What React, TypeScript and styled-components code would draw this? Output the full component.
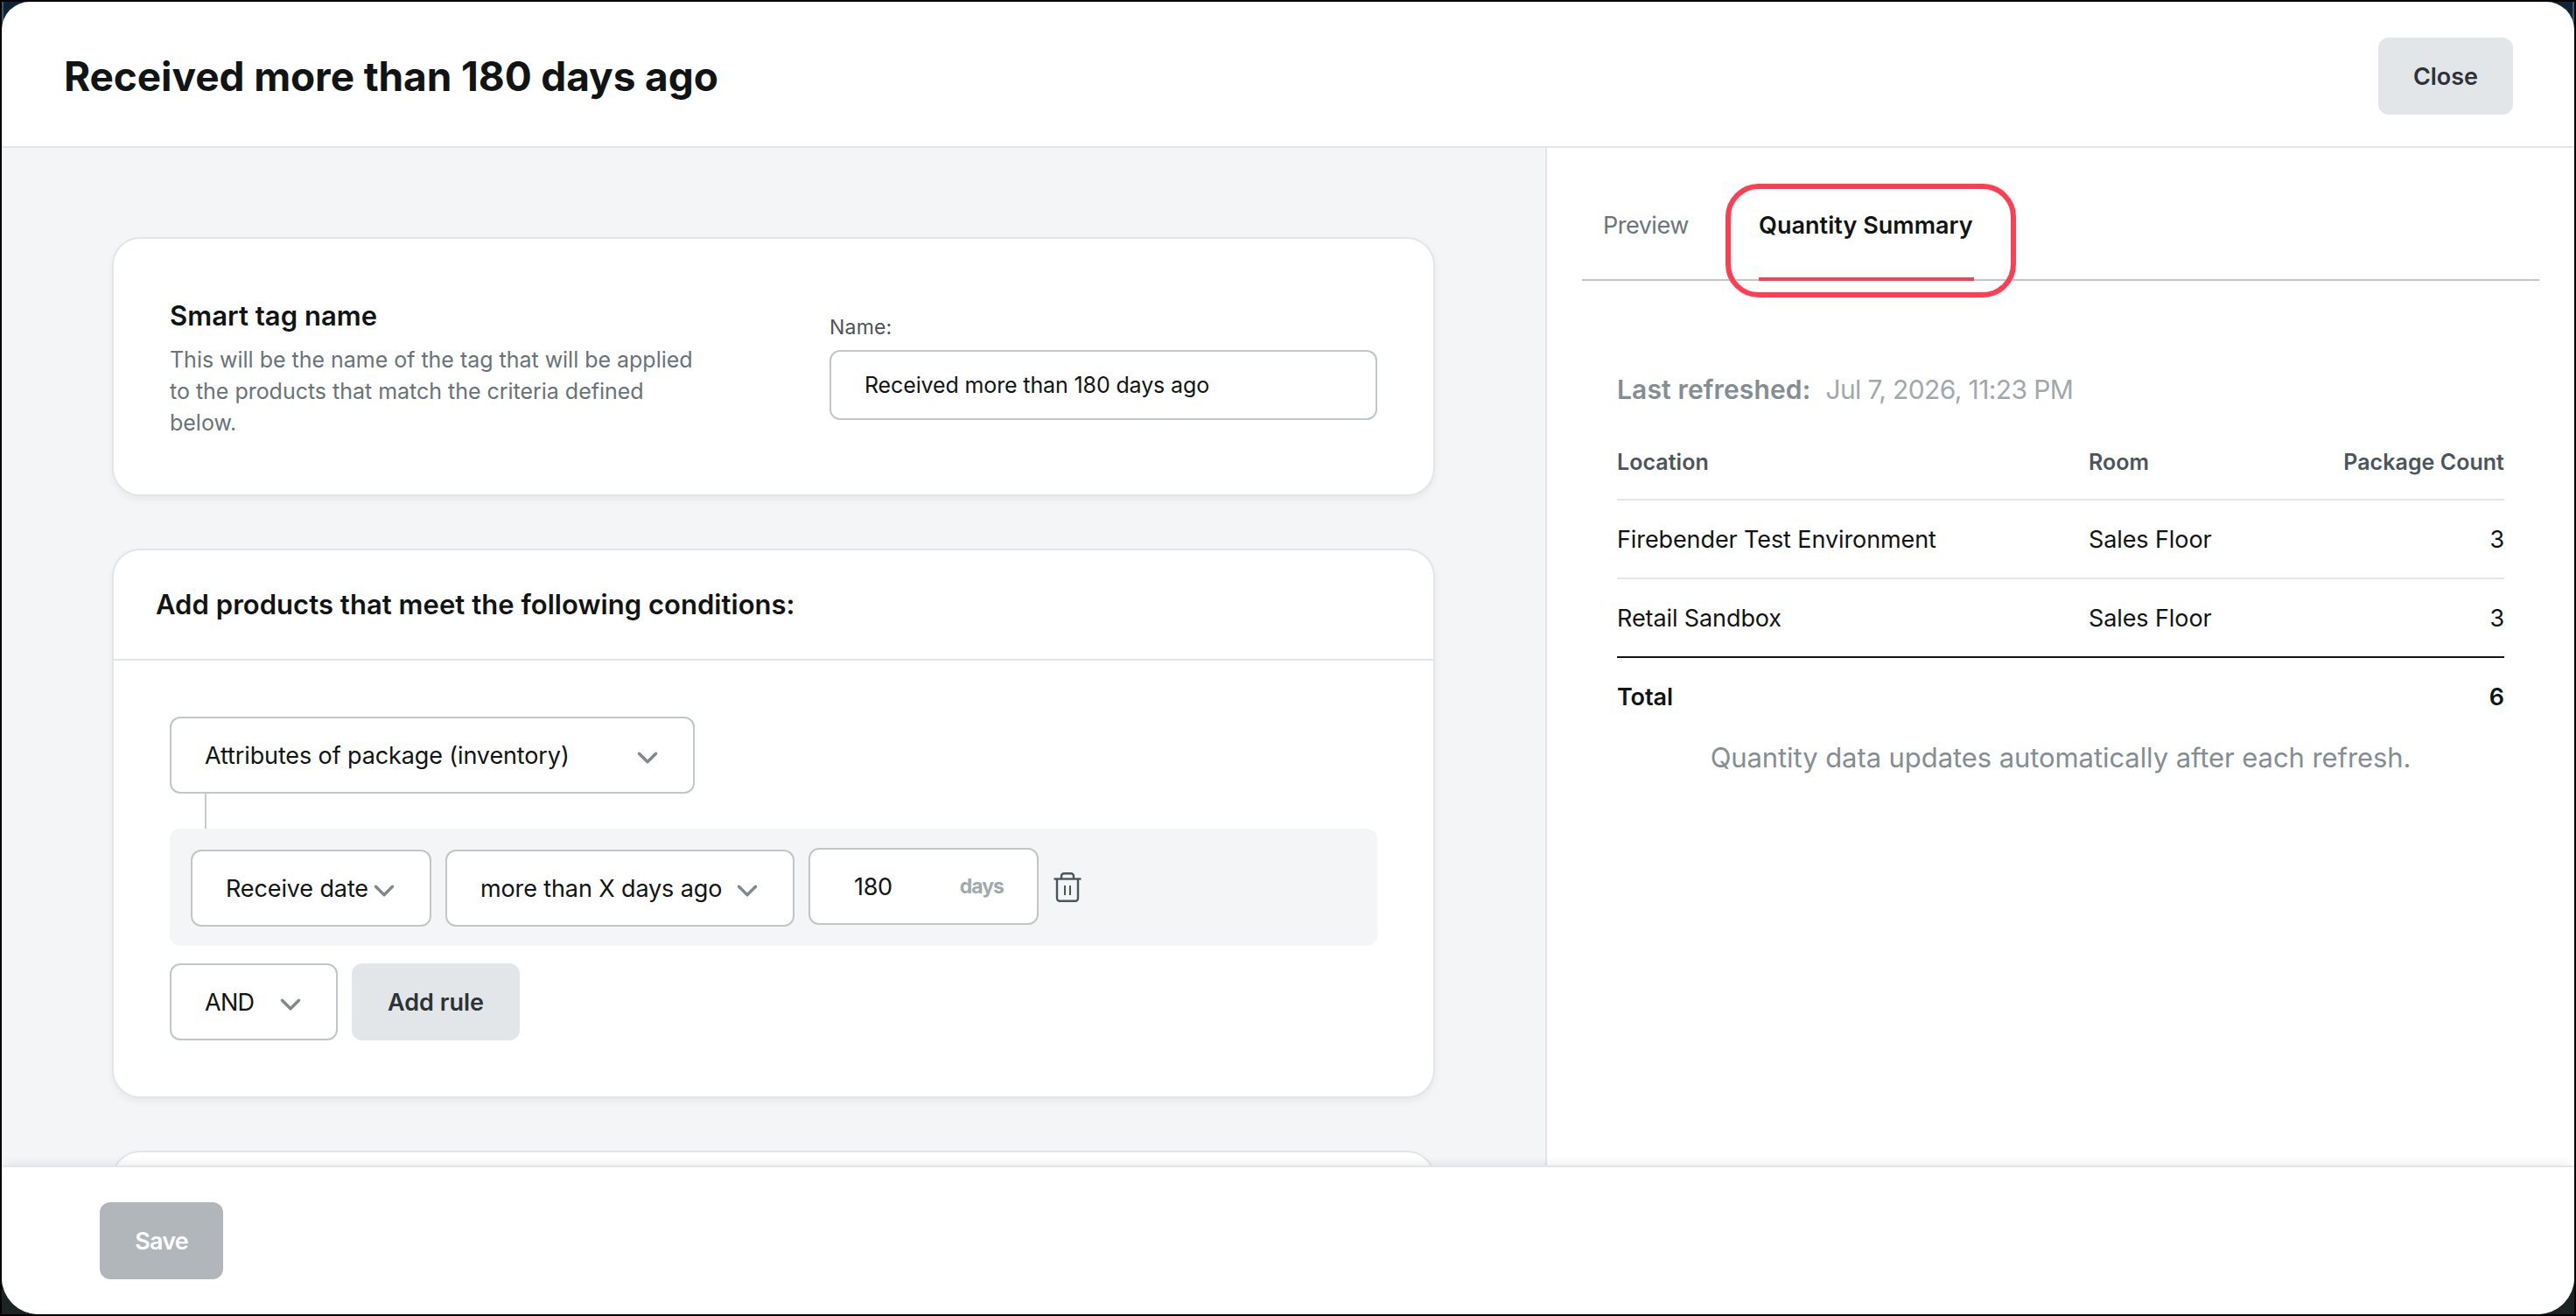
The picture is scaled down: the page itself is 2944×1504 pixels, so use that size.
import React from 'react';
import styled, { createGlobalStyle } from 'styled-components';

const GlobalStyle = createGlobalStyle`
  *, *::before, *::after {
    box-sizing: border-box;
  }

  body {
    margin: 0;
    background: #000000;
    color: #111414;
    font-family: Inter, 'Liberation Sans', sans-serif;
    font-size: 27px;
    line-height: 36px;
  }

  h1, h2, p {
    margin: 0;
  }

  button, input {
    font-family: inherit;
  }
`;

const Backdrop = styled.div`
  position: relative;
  height: 1504px;
  border: 2px solid #000000;
  background: linear-gradient(#0c2338 0 50%, #1d2222 50% 100%);

  /* lighter edge of the page behind the modal */
  &::before {
    content: '';
    position: absolute;
    top: 0;
    left: 0;
    right: 0;
    height: 24px;
    border: solid #41566a;
    border-width: 0 2px;
  }
`;

const Modal = styled.div`
  position: relative;
  display: flex;
  flex-direction: column;
  height: 100%;
  background: #ffffff;
  border-radius: 32px 32px 42px 42px;
  overflow: hidden;
`;

const Header = styled.header`
  display: flex;
  align-items: center;
  justify-content: space-between;
  padding: 41px 70px 36px 71px;
  border-bottom: 2px solid #e2e6e9;
`;

const Title = styled.h1`
  font-size: 46px;
  font-weight: 700;
  line-height: 56px;
  letter-spacing: -0.1px;
`;

const Button = styled.button<{ $width: number; $muted?: boolean; $spacing?: number }>`
  width: ${({ $width }) => $width}px;
  height: 88px;
  padding: 0;
  border: none;
  border-radius: 12px;
  background: ${({ $muted }) => ($muted ? '#b0b6ba' : '#e2e6e9')};
  color: ${({ $muted }) => ($muted ? '#ffffff' : '#2d3236')};
  font-size: 27px;
  font-weight: 600;
  letter-spacing: ${({ $spacing = 0 }) => $spacing}px;
`;

const Content = styled.div`
  display: grid;
  grid-template-columns: 1766px 1fr;
  height: 1163px;
`;

const Editor = styled.main`
  display: flex;
  flex-direction: column;
  gap: 60px;
  padding: 102px 126px 0;
  border-right: 2px solid #e2e6e9;
  background: #f4f5f7;
  overflow: hidden;
`;

const Card = styled.section`
  flex: none;
  width: 1512px;
  min-height: 120px;
  border: 2px solid #e2e6e9;
  border-radius: 32px;
  background: #ffffff;
  box-shadow: 0 4px 8px rgba(17, 20, 20, 0.05);
`;

const NameRow = styled.div`
  display: flex;
  justify-content: space-between;
  padding: 66px 64px 64px;
`;

const NameInfo = styled.div`
  width: 612px;
`;

const CardTitle = styled.h2`
  font-size: 31px;
  font-weight: 600;
  line-height: 44px;
  letter-spacing: 0.04px;
`;

const Description = styled.p`
  margin-top: 10px;
  color: #687379;
  font-size: 25px;
  letter-spacing: -0.02px;
`;

const Field = styled.div`
  width: 626px;
  padding-top: 19px;
`;

const Label = styled.label`
  display: block;
  margin-bottom: 10px;
  color: #4b545a;
  font-size: 23px;
  line-height: 32px;
  letter-spacing: 0.2px;
`;

const TextInput = styled.input`
  display: block;
  width: 100%;
  height: 80px;
  padding: 0 38px;
  border: 2px solid #c0c6ca;
  border-radius: 12px;
  background: #ffffff;
  color: #111414;
  font-size: 25px;
  letter-spacing: -0.13px;
`;

const CardHeader = styled.div`
  display: flex;
  align-items: center;
  height: 126px;
  padding-left: 48px;
  border-bottom: 2px solid #e2e6e9;
`;

const CardBody = styled.div`
  padding: 64px;
`;

const SelectBox = styled.div<{ $width: number; $spacing?: number }>`
  display: flex;
  align-items: center;
  justify-content: space-between;
  flex: none;
  width: ${({ $width }) => $width}px;
  height: 88px;
  padding: 2px 40px 0 38px;
  border: 2px solid #c0c6ca;
  border-radius: 12px;
  background: #ffffff;
  letter-spacing: ${({ $spacing = -0.12 }) => $spacing}px;
  white-space: nowrap;

  svg {
    flex: none;
    margin-top: 3px;
  }
`;

const Connector = styled.div`
  width: 2px;
  height: 40px;
  margin-left: 40px;
  background: #c6cacd;
`;

const Rule = styled.div`
  display: flex;
  align-items: flex-start;
  gap: 16px;
  height: 134px;
  padding: 24px;
  border-radius: 12px;
  background: #f4f5f7;
`;

const DaysField = styled.div`
  display: flex;
  align-items: center;
  justify-content: space-between;
  width: 263px;
  height: 88px;
  margin-top: -2px;
  padding: 2px 38px 0 50px;
  border: 2px solid #c0c6ca;
  border-radius: 12px;
  background: #ffffff;
  letter-spacing: -0.34px;
`;

const Unit = styled.span`
  padding-bottom: 3px;
  color: #a2a9ad;
  font-size: 23px;
  font-weight: 700;
  letter-spacing: -1px;
`;

const TrashButton = styled.button`
  margin: 25px 0 0 1px;
  padding: 0;
  border: none;
  background: none;
  line-height: 0;
`;

const Actions = styled.div`
  display: flex;
  gap: 16px;
  margin-top: 20px;
`;

const Summary = styled.aside`
  padding: 71px 40px 0;
`;

const Tabs = styled.nav`
  display: flex;
  gap: 80px;
  padding-left: 24px;
  border-bottom: 2px solid #c0c6ca;
`;

const Tab = styled.div<{ $width: number; $active?: boolean }>`
  position: relative;
  width: ${({ $width }) => $width}px;
  margin-bottom: -2px;
  padding-bottom: 41px;
  border-bottom: 4px solid ${({ $active }) => ($active ? '#ff3d53' : 'transparent')};
  color: ${({ $active }) => ($active ? '#111414' : '#6a757b')};
  font-weight: ${({ $active }) => ($active ? 600 : 400)};
  letter-spacing: ${({ $active }) => ($active ? 0.04 : -0.5)}px;
  white-space: nowrap;
`;

const Highlight = styled.div`
  position: absolute;
  top: -30px;
  right: -48px;
  bottom: -23px;
  left: -38px;
  border: 6px solid #ff3d53;
  border-radius: 38px;
`;

const SummaryBody = styled.div`
  padding: 104px 40px 0;
`;

const Refreshed = styled.div`
  display: flex;
  gap: 17px;
  margin-bottom: 17px;
  color: #a1a8ac;
  font-size: 30px;
  line-height: 40px;
  letter-spacing: -0.61px;

  strong {
    color: #848d92;
    font-weight: 600;
    letter-spacing: 0.14px;
  }
`;

const TableRow = styled.div<{ $kind?: 'head' | 'last' | 'total' }>`
  display: grid;
  grid-template-columns: 539px 1fr auto;
  align-items: center;
  height: ${({ $kind }) => ($kind === 'total' ? 88 : 90)}px;
  padding-top: ${({ $kind }) => ($kind === 'head' ? 4 : 2)}px;
  border-bottom: ${({ $kind }) => ($kind === 'total' ? 0 : 2)}px solid
    ${({ $kind }) => ($kind === 'last' ? '#111414' : '#e2e6e9')};
  color: ${({ $kind }) => ($kind === 'head' ? '#4b555b' : '#111414')};
  font-size: ${({ $kind }) => ($kind === 'head' ? 25 : 27)}px;
  font-weight: ${({ $kind }) => ($kind === 'head' || $kind === 'total' ? 600 : 400)};
  letter-spacing: ${({ $kind }) => ($kind === 'head' ? 0.04 : -0.1)}px;
`;

const Note = styled.p`
  margin-top: 4px;
  color: #848d92;
  font-size: 31px;
  line-height: 44px;
  letter-spacing: -0.08px;
  text-align: center;
`;

const Footer = styled.footer`
  position: relative;
  flex: 1;
  padding: 40px 112px;
  border-top: 2px solid #e2e6e9;
  background: #ffffff;
  box-shadow: 0 -4px 12px -4px rgba(0, 0, 0, 0.1);
`;

const LOCATIONS = [
    { location: 'Firebender Test Environment', room: 'Sales Floor', count: 3 },
    { location: 'Retail Sandbox', room: 'Sales Floor', count: 3 },
];

const Chevron: React.FC = () => (
    <svg width="24" height="14" viewBox="0 0 24 14" fill="none">
        <path d="M2.5 2.2 12 11.8l9.5-9.6" stroke="#7f888d" strokeWidth="3.4" strokeLinecap="round" strokeLinejoin="round" />
    </svg>
);

const TrashIcon: React.FC = () => (
    <svg width="32" height="36" viewBox="0 0 32 36" fill="none" stroke="#4b555c" strokeWidth="2.4">
        <path d="M0.5 8.5h31" />
        <path d="M9 8.5V5.2a3 3 0 0 1 3-3h8a3 3 0 0 1 3 3v3.3" />
        <path d="M4 8.5v22.3a3 3 0 0 0 3 3h18a3 3 0 0 0 3-3V8.5" />
        <path d="M13 16v11M19 16v11" strokeWidth="2" />
    </svg>
);

const Select: React.FC<{ label: string; width: number; spacing?: number }> = ({ label, width, spacing }) => (
    <SelectBox $width={width} $spacing={spacing}>
        {label}
        <Chevron />
    </SelectBox>
);

const App: React.FC = () => {
    const total = LOCATIONS.reduce((sum, row) => sum + row.count, 0);

    return (
        <Backdrop>
            <GlobalStyle />
            <Modal>
                <Header>
                    <Title>Received more than 180 days ago</Title>
                    <Button $width={154}>Close</Button>
                </Header>

                <Content>
                    <Editor>
                        <Card>
                            <NameRow>
                                <NameInfo>
                                    <CardTitle>Smart tag name</CardTitle>
                                    <Description>
                                        This will be the name of the tag that will be applied to the products that
                                        match the criteria defined below.
                                    </Description>
                                </NameInfo>
                                <Field>
                                    <Label htmlFor="tag-name">Name:</Label>
                                    <TextInput id="tag-name" defaultValue="Received more than 180 days ago" />
                                </Field>
                            </NameRow>
                        </Card>

                        <Card>
                            <CardHeader>
                                <CardTitle>Add products that meet the following conditions:</CardTitle>
                            </CardHeader>
                            <CardBody>
                                <Select label="Attributes of package (inventory)" width={600} />
                                <Connector />
                                <Rule>
                                    <Select label="Receive date" width={275} />
                                    <Select label="more than X days ago" width={399} />
                                    <DaysField>
                                        180
                                        <Unit>days</Unit>
                                    </DaysField>
                                    <TrashButton aria-label="Delete rule">
                                        <TrashIcon />
                                    </TrashButton>
                                </Rule>
                                <Actions>
                                    <Select label="AND" width={192} spacing={-0.7} />
                                    <Button $width={192}>Add rule</Button>
                                </Actions>
                            </CardBody>
                        </Card>

                        <Card />
                    </Editor>

                    <Summary>
                        <Tabs>
                            <Tab $width={98}>Preview</Tab>
                            <Tab $width={246} $active>
                                Quantity Summary
                                <Highlight />
                            </Tab>
                        </Tabs>

                        <SummaryBody>
                            <Refreshed>
                                <strong>Last refreshed:</strong>
                                <span>Jul 7, 2026, 11:23 PM</span>
                            </Refreshed>
                            <TableRow $kind="head">
                                <span>Location</span>
                                <span>Room</span>
                                <span>Package Count</span>
                            </TableRow>
                            {LOCATIONS.map((row, index) => (
                                <TableRow
                                    key={row.location}
                                    $kind={index === LOCATIONS.length - 1 ? 'last' : undefined}
                                >
                                    <span>{row.location}</span>
                                    <span>{row.room}</span>
                                    <span>{row.count}</span>
                                </TableRow>
                            ))}
                            <TableRow $kind="total">
                                <span>Total</span>
                                <span />
                                <span>{total}</span>
                            </TableRow>
                            <Note>Quantity data updates automatically after each refresh.</Note>
                        </SummaryBody>
                    </Summary>
                </Content>

                <Footer>
                    <Button $width={141} $muted $spacing={-0.8}>
                        Save
                    </Button>
                </Footer>
            </Modal>
        </Backdrop>
    );
};

export default App;
